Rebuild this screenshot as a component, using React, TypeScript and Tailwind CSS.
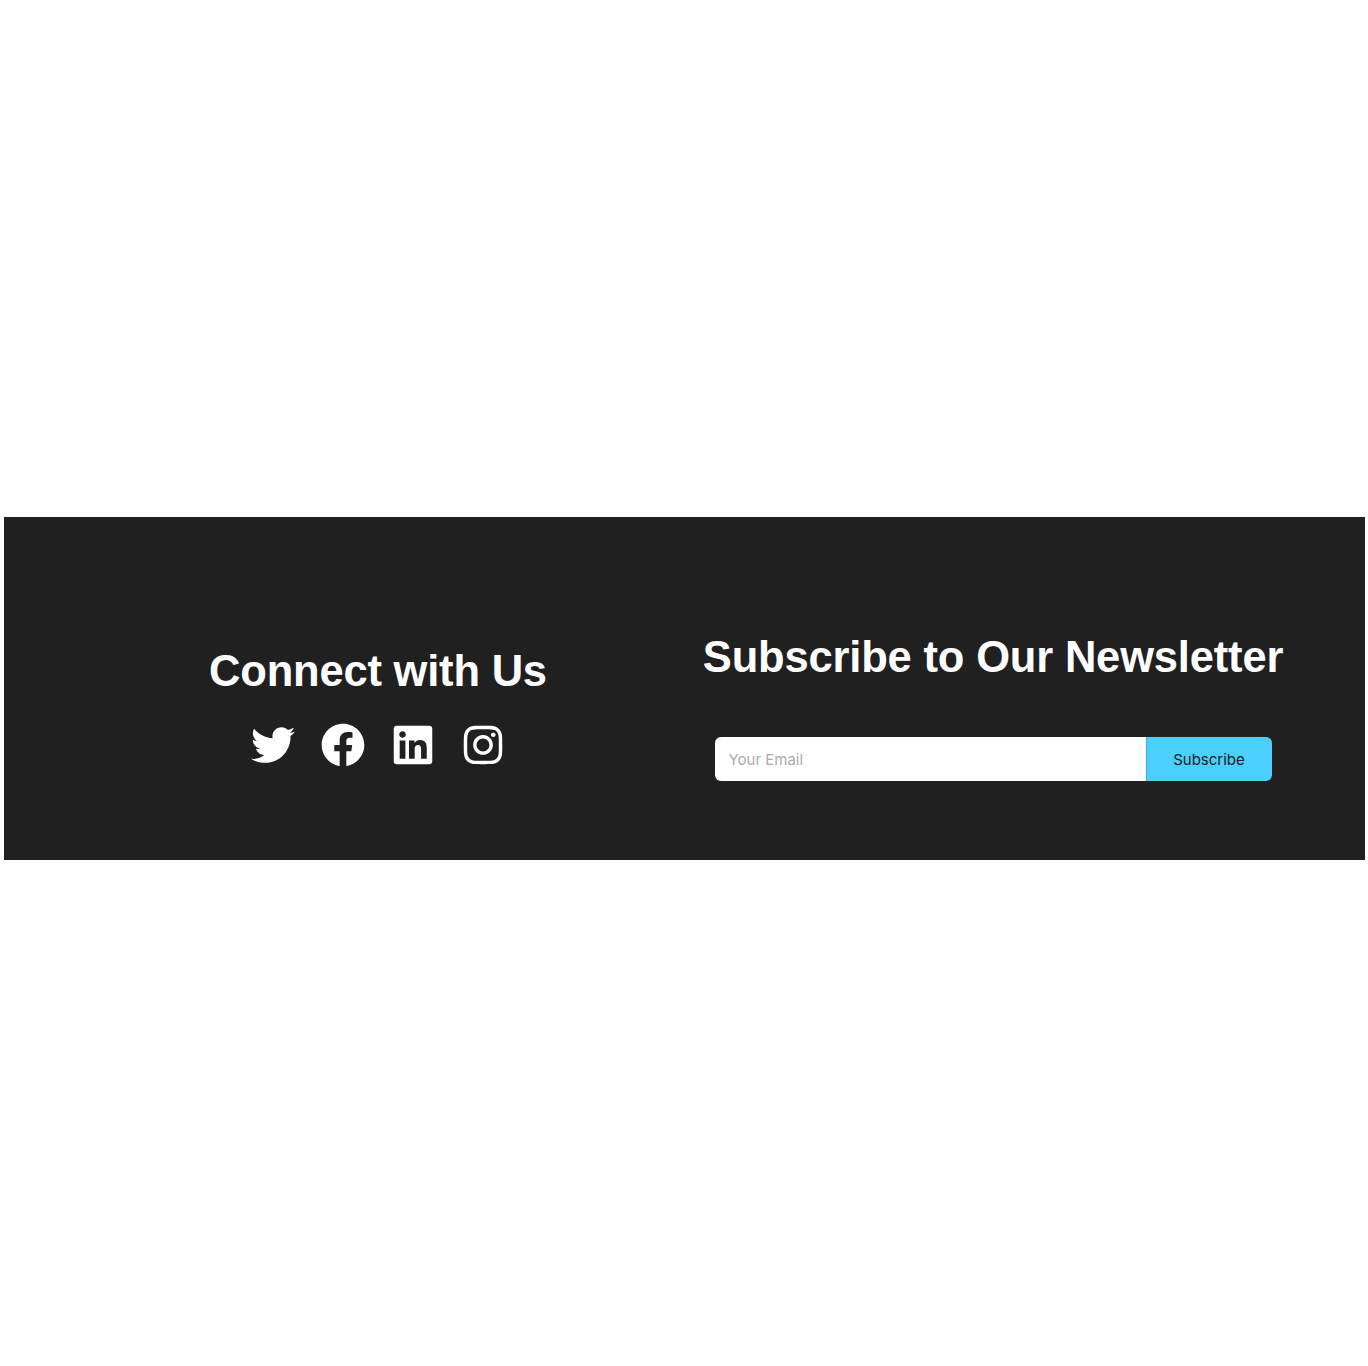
import { FaTwitter, FaFacebook, FaLinkedin, FaInstagram } from "react-icons/fa";

export default function App() {
  return (
    <div className="flex h-[1366px] w-[1368px] flex-col bg-[#fefefe] pt-[517px]">
      <footer className="ml-1 flex h-[343px] w-[1361px] bg-[#202020] text-white">
        <section className="ml-[168px] flex w-[412px] flex-col items-center pt-[129px]">
          <h2 className="whitespace-nowrap font-['Liberation_Sans',sans-serif] text-[43.5px] font-bold leading-[50px] tracking-[-0.2px]">
            Connect with Us
          </h2>
          <div className="mt-[27px] flex gap-[26px] text-[44px]">
            <FaTwitter />
            <FaFacebook />
            <FaLinkedin />
            <FaInstagram />
          </div>
        </section>
        <section className="ml-[115px] flex w-[588px] flex-col items-center pt-[115px]">
          <h2 className="whitespace-nowrap font-['Liberation_Sans',sans-serif] text-[43.5px] font-bold leading-[50px] tracking-[-0.17px]">
            Subscribe to Our Newsletter
          </h2>
          <form className="mt-[54.6px] flex h-[44.4px] w-[557px] overflow-hidden rounded-md font-[Inter,sans-serif] text-[15px]">
            <input
              type="email"
              placeholder="Your Email"
              className="w-[431px] bg-white px-[14px] pt-[2px] placeholder:text-[#acacac]"
            />
            <button type="button" className="w-[126px] border-l border-[#53a9c8] bg-[#4bcffe] pt-[2px] text-[#202020]">
              Subscribe
            </button>
          </form>
        </section>
      </footer>
    </div>
  );
}
